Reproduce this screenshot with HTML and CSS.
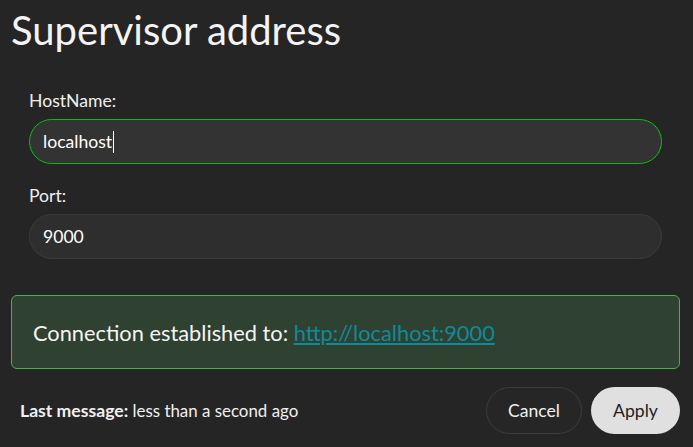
FILE: index.html
```html
<!DOCTYPE html>
<html>
<head>
<meta charset="utf-8">
<link rel="stylesheet" href="styles.css">
</head>
<body>
<div class="dialog">
  <h1 class="title">Supervisor address</h1>
  <div class="form">
    <label class="field">
      <span class="label">HostName:</span>
      <span class="input focused">localhost<span class="caret"></span></span>
    </label>
    <label class="field">
      <span class="label">Port:</span>
      <span class="input">9000</span>
    </label>
  </div>
  <div class="alert"><span>Connection established to: <a class="link" href="#">http://localhost:9000</a></span></div>
  <div class="footer">
    <div class="status"><b>Last message:</b> less than a second ago</div>
    <div class="actions">
      <button class="btn btn-cancel">Cancel</button>
      <button class="btn btn-apply">Apply</button>
    </div>
  </div>
</div>
</body>
</html>
```

FILE: styles.css
```css
html, body {
  margin: 0;
  padding: 0;
  background: #252525;
  color: #ffffff;
  font-family: Lato, "Open Sans", sans-serif;
}
.dialog {
  padding: 6px 13px 0 11px;
}
.title {
  margin: 0;
  font-size: 40px;
  font-weight: 400;
  line-height: 48px;
  color: #f4f4f4;
}
.form {
  padding: 0 18px;
  margin-top: 36px;
  display: flex;
  flex-direction: column;
  gap: 21px;
}
.field {
  display: flex;
  flex-direction: column;
  gap: 8px;
}
.label {
  font-size: 17.6px;
  line-height: 21px;
  color: #f0f0f0;
}
.input {
  display: flex;
  align-items: center;
  height: 43px;
  border: 1px solid #3a3a3a;
  border-radius: 23px;
  background: #2e2e2e;
  padding: 0 13px;
  font-size: 17.6px;
  line-height: 21px;
  color: #ffffff;
}
.input.focused {
  border-color: #0bbd0b;
  background: #333333;
}
.caret {
  display: inline-block;
  width: 1px;
  height: 22px;
  background: #ffffff;
  margin-left: 1px;
}
.alert {
  margin-top: 36px;
  height: 72px;
  display: flex;
  align-items: center;
  padding: 0 21px;
  border: 1px solid #4caf50;
  border-radius: 6px;
  background: #2f4130;
  font-size: 21.8px;
  color: #f4f4f4;
}
.link {
  color: #0f8a9a;
  text-decoration: underline;
}
.footer {
  margin-top: 18px;
  display: flex;
  align-items: center;
  justify-content: space-between;
  padding-left: 9px;
}
.status {
  font-size: 16.9px;
  line-height: 21px;
  color: #f0f0f0;
}
.status b {
  font-size: 17.6px;
  font-weight: 700;
}
.actions {
  display: flex;
  gap: 9px;
}
.btn {
  font-family: Lato, "Open Sans", sans-serif;
  font-size: 17.6px;
  height: 47px;
  border-radius: 24px;
  padding: 0;
  cursor: pointer;
}
.btn-cancel {
  width: 96px;
  background: #262626;
  color: #f0f0f0;
  border: 1px solid #3c3c3c;
}
.btn-apply {
  width: 89px;
  background: #e0e0e0;
  color: #222222;
  border: none;
}
```
